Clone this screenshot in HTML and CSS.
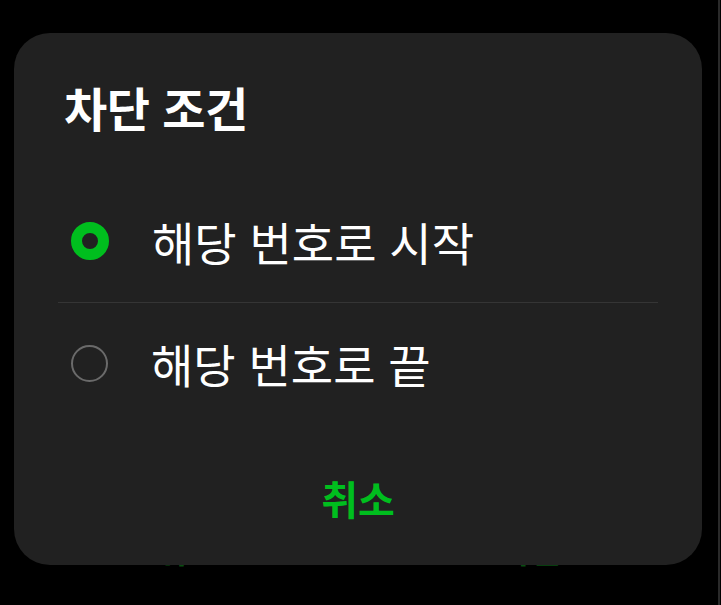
FILE: index.html
```html
<!DOCTYPE html>
<html lang="ko">
<head>
<meta charset="utf-8">
<link rel="stylesheet" href="styles.css">
</head>
<body>
<div class="screen">
  <div class="under">
    <span class="under-btn">취</span>
    <span class="under-btn">차단</span>
  </div>
  <div class="scrollbar"></div>
  <div class="dialog">
    <h1 class="title">차단 조건</h1>
    <div class="options">
      <div class="option option-first">
        <span class="radio radio-on"></span>
        <span class="label">해당 번호로 시작</span>
      </div>
      <div class="divider"></div>
      <div class="option">
        <span class="radio radio-off"></span>
        <span class="label">해당 번호로 끝</span>
      </div>
    </div>
    <div class="actions">
      <button class="cancel">취소</button>
    </div>
  </div>
</div>
</body>
</html>
```
FILE: styles.css
```css
* { box-sizing: border-box; }
html, body {
  margin: 0;
  padding: 0;
  background: #000;
  width: 721px;
  height: 605px;
  overflow: hidden;
  font-family: "Noto Sans CJK KR", "Noto Sans", sans-serif;
}
.screen {
  position: relative;
  width: 721px;
  height: 605px;
}
.under {
  position: absolute;
  left: 0;
  top: 524px;
  width: 718px;
  display: flex;
  justify-content: space-around;
  color: #0a4d12;
  font-size: 34px;
  font-weight: 700;
  line-height: 50px;
}
.scrollbar {
  position: absolute;
  left: 718px;
  top: 0;
  width: 2px;
  height: 605px;
  background: #2a2a2a;
}
.dialog {
  position: absolute;
  left: 14px;
  top: 33px;
  width: 688px;
  height: 532px;
  background: #212121;
  border-radius: 36px;
  display: flex;
  flex-direction: column;
}
.title {
  margin: 0;
  padding: 45px 0 0 50px;
  color: #fff;
  font-size: 47px;
  font-weight: 700;
  line-height: 58px;
  letter-spacing: -0.5px;
}
.options {
  margin-top: 44px;
  padding: 0 44px;
}
.option {
  display: flex;
  align-items: center;
  height: 120px;
}
.option-first { height: 122px; }
.radio {
  width: 38px;
  height: 38px;
  border-radius: 50%;
  margin-left: 13px;
  flex: none;
}
.radio-on {
  border: 11px solid #00be1e;
}
.radio-off {
  width: 37px;
  height: 37px;
  border: 2.5px solid #6a6a6a;
}
.label {
  margin-left: 43px;
  color: #fff;
  font-size: 46px;
  line-height: 60px;
  letter-spacing: 0;
}
.divider {
  height: 1px;
  background: #353535;
}
.actions {
  flex: 1;
  display: flex;
  justify-content: center;
  align-items: flex-start;
  padding-top: 49px;
}
.cancel {
  background: none;
  border: none;
  padding: 0;
  color: #00be1e;
  font-family: inherit;
  font-size: 40px;
  font-weight: 700;
  line-height: 52px;
}
```
